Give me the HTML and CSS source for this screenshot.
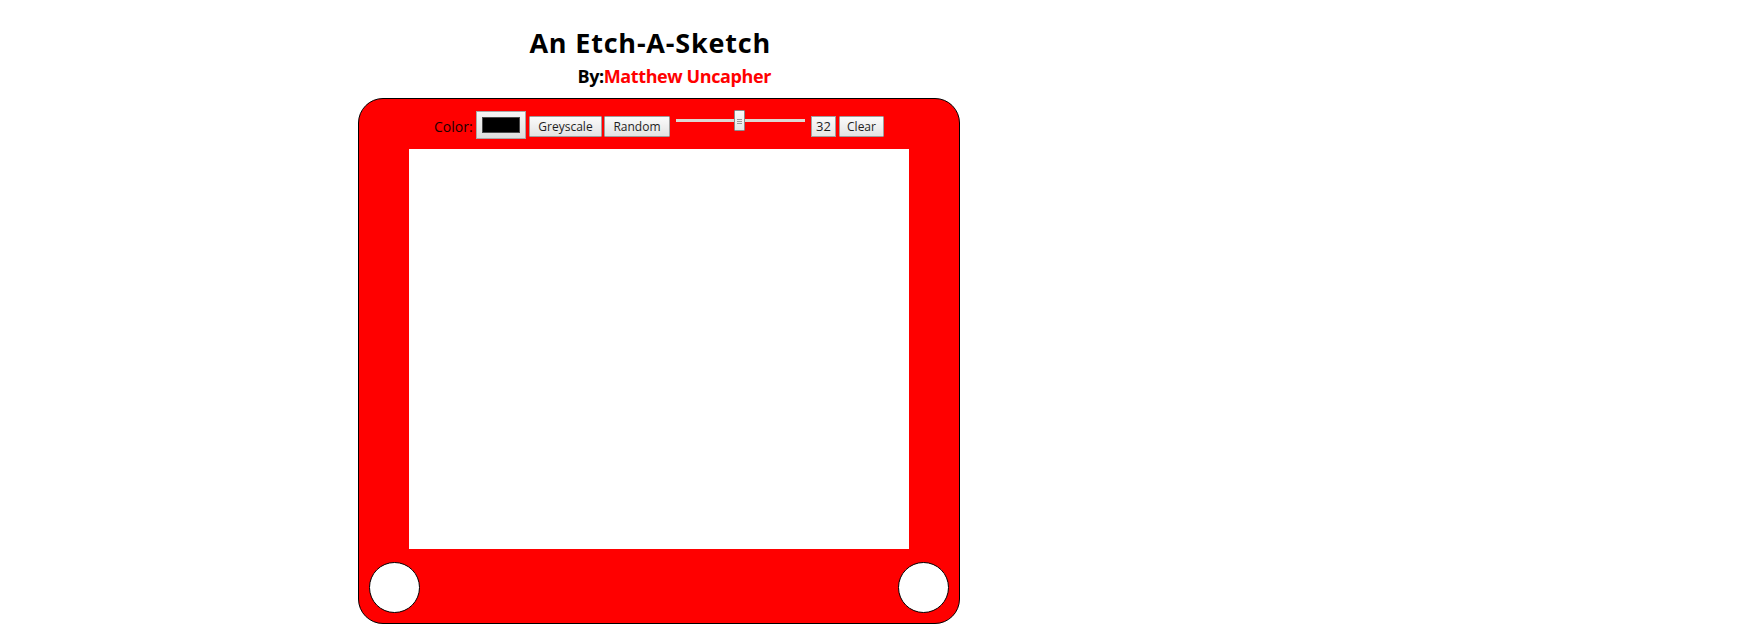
FILE: index.html
```html
<!DOCTYPE html>
<html lang="en">
<head>
<meta charset="utf-8">
<title>Etch-A-Sketch</title>
<link rel="stylesheet" href="styles.css">
</head>
<body>
<header class="header">
  <h1 class="title">An Etch-A-Sketch</h1>
  <h3 class="byline">By:<span class="author">Matthew Uncapher</span></h3>
</header>
<div class="frame">
  <div class="controls">
    <label class="color-label" for="color">Color:</label>
    <input class="color-input" id="color" type="color" value="#000000">
    <button class="btn btn-grey">Greyscale</button>
    <button class="btn btn-random">Random</button>
    <input class="size-range" type="range" min="1" max="64" value="32">
    <span class="size-value">32</span>
    <button class="btn btn-clear">Clear</button>
  </div>
  <div class="grid"></div>
  <div class="knobs">
    <div class="knob"></div>
    <div class="knob"></div>
  </div>
</div>
</body>
</html>
```
FILE: styles.css
```css
html, body {
  margin: 0;
  padding: 0;
  background: #fff;
}
body {
  font-family: "Open Sans", "DejaVu Sans", sans-serif;
  color: #000;
}
.header {
  width: 413px;
  margin-left: 358px;
  padding-top: 28px;
  text-align: right;
}
.title {
  margin: 0;
  font-size: 27px;
  line-height: 30px;
  font-weight: 700;
  letter-spacing: 0.8px;
}
.byline {
  margin: 7px 0 0 0;
  font-size: 18px;
  line-height: 22px;
  font-weight: 700;
  letter-spacing: -0.4px;
}
.author {
  color: #ff0000;
}
.frame {
  margin: 11px 0 0 358px;
  width: 500px;
  padding: 0 50px;
  background: #ff0000;
  border: 1px solid #000;
  border-radius: 25px;
}
.controls {
  height: 50px;
  display: flex;
  align-items: flex-start;
  justify-content: center;
}
.color-label {
  margin-top: 18px;
  margin-right: 2px;
  font-size: 14px;
  line-height: 20px;
  width: 40px;
  white-space: nowrap;
  color: #1a0000;
}
.color-input {
  -webkit-appearance: none;
  appearance: none;
  box-sizing: border-box;
  width: 50px;
  height: 28px;
  margin: 12px 0 0 0;
  padding: 0;
  border: 1px solid #a8a8a8;
  background: linear-gradient(#f6f6f6, #dedede);
  cursor: pointer;
}
.color-input::-webkit-color-swatch-wrapper {
  padding: 5px;
}
.color-input::-webkit-color-swatch {
  border: 1px solid #4a4a4a;
}
.btn {
  box-sizing: border-box;
  height: 21px;
  margin: 17px 0 0 0;
  padding: 0;
  border: 1px solid #9e9e9e;
  border-radius: 1px;
  background: linear-gradient(#fbfbfb, #e3e3e3);
  font-family: "Open Sans", "DejaVu Sans", sans-serif;
  font-size: 12px;
  line-height: 19px;
  color: #1e1e1e;
  text-align: center;
}
.btn-grey {
  width: 73px;
  margin-left: 3px;
}
.btn-random {
  width: 66px;
  margin-left: 2px;
}
.btn-clear {
  width: 45px;
  margin-left: 3px;
}
.size-range {
  -webkit-appearance: none;
  appearance: none;
  width: 129px;
  height: 21px;
  margin: 11px 0 0 6px;
  padding: 0;
  background: transparent;
}
.size-range::-webkit-slider-runnable-track {
  height: 3px;
  background: #dcd8d2;
}
.size-range::-webkit-slider-thumb {
  -webkit-appearance: none;
  appearance: none;
  box-sizing: border-box;
  width: 11px;
  height: 21px;
  margin-top: -9px;
  border: 1px solid #8c8c8c;
  border-radius: 1px;
  background:
    linear-gradient(#9a9a9a, #9a9a9a) 50% 8px / 5px 1px no-repeat,
    linear-gradient(#9a9a9a, #9a9a9a) 50% 10px / 5px 1px no-repeat,
    linear-gradient(#9a9a9a, #9a9a9a) 50% 12px / 5px 1px no-repeat,
    linear-gradient(#fafafa, #e6e6e6);
}
.size-value {
  box-sizing: border-box;
  width: 25px;
  height: 21px;
  margin: 17px 0 0 6px;
  border: 1px solid #a0a0a0;
  background: linear-gradient(#fbfbfb, #e6e6e6);
  font-size: 13px;
  line-height: 19px;
  text-align: center;
  color: #1e1e1e;
}
.grid {
  width: 500px;
  height: 400px;
  background: #fff;
}
.knobs {
  display: flex;
  justify-content: space-between;
  margin: 0 -40px;
  padding: 13px 0 10px 0;
}
.knob {
  width: 49px;
  height: 49px;
  border: 1px solid #000;
  border-radius: 50%;
  background: #fff;
}
```
